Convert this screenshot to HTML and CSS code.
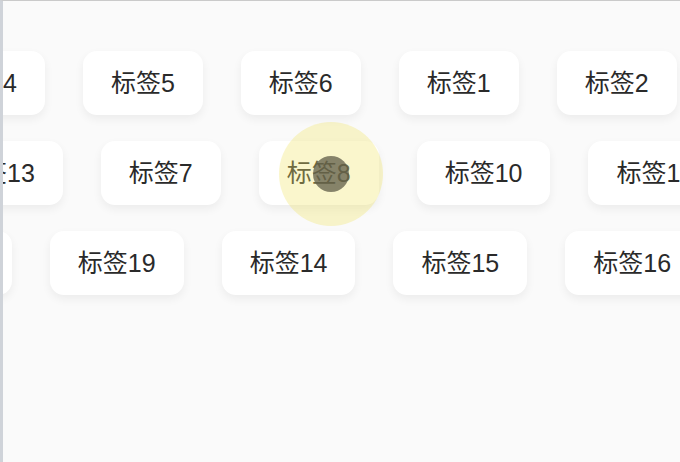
FILE: index.html
```html
<!DOCTYPE html>
<html lang="zh">
<head>
<meta charset="utf-8">
<link rel="stylesheet" href="styles.css">
</head>
<body>
<div class="frame">
  <div class="rows">
    <div class="row row-1">
      <span class="tag">标签4</span>
      <span class="tag">标签5</span>
      <span class="tag">标签6</span>
      <span class="tag">标签1</span>
      <span class="tag">标签2</span>
    </div>
    <div class="row row-2">
      <span class="tag">标签13</span>
      <span class="tag">标签7</span>
      <span class="tag">标签8</span>
      <span class="tag">标签10</span>
      <span class="tag">标签11</span>
    </div>
    <div class="row row-3">
      <span class="tag">标签18</span>
      <span class="tag">标签19</span>
      <span class="tag">标签14</span>
      <span class="tag">标签15</span>
      <span class="tag">标签16</span>
    </div>
  </div>
  <div class="touch"><div class="touch-dot"></div></div>
</div>
</body>
</html>
```
FILE: styles.css
```css
html, body {
  margin: 0;
  padding: 0;
  height: 100%;
}
body {
  background: #fafafa;
  font-family: "Liberation Sans", "Noto Sans CJK SC", sans-serif;
  overflow: hidden;
}
.frame {
  position: relative;
  height: 462px;
  box-sizing: border-box;
  border-top: 1px solid #cacaca;
  border-left: 3px solid #cfd3d9;
  overflow: hidden;
}
.rows {
  display: flex;
  flex-direction: column;
  gap: 26px;
  padding-top: 50px;
}
.row {
  display: flex;
  gap: 38px;
  white-space: nowrap;
}
.row-1 { margin-left: -78px; }
.row-2 { margin-left: -74px; }
.row-3 { margin-left: -125px; }
.tag {
  flex-shrink: 0;
  height: 64px;
  box-sizing: border-box;
  padding: 0 28px 4px;
  display: flex;
  align-items: center;
  justify-content: center;
  background: #ffffff;
  border-radius: 14px;
  box-shadow: 0 4px 10px rgba(0, 0, 0, 0.06);
  color: #2a2a2a;
  font-size: 25px;
}
.touch {
  position: absolute;
  left: 276px;
  top: 121px;
  width: 104px;
  height: 104px;
  border-radius: 50%;
  background: rgba(242, 228, 110, 0.35);
  display: flex;
  align-items: center;
  justify-content: center;
}
.touch-dot {
  width: 36px;
  height: 36px;
  border-radius: 50%;
  background: rgba(95, 92, 72, 0.75);
}
```
